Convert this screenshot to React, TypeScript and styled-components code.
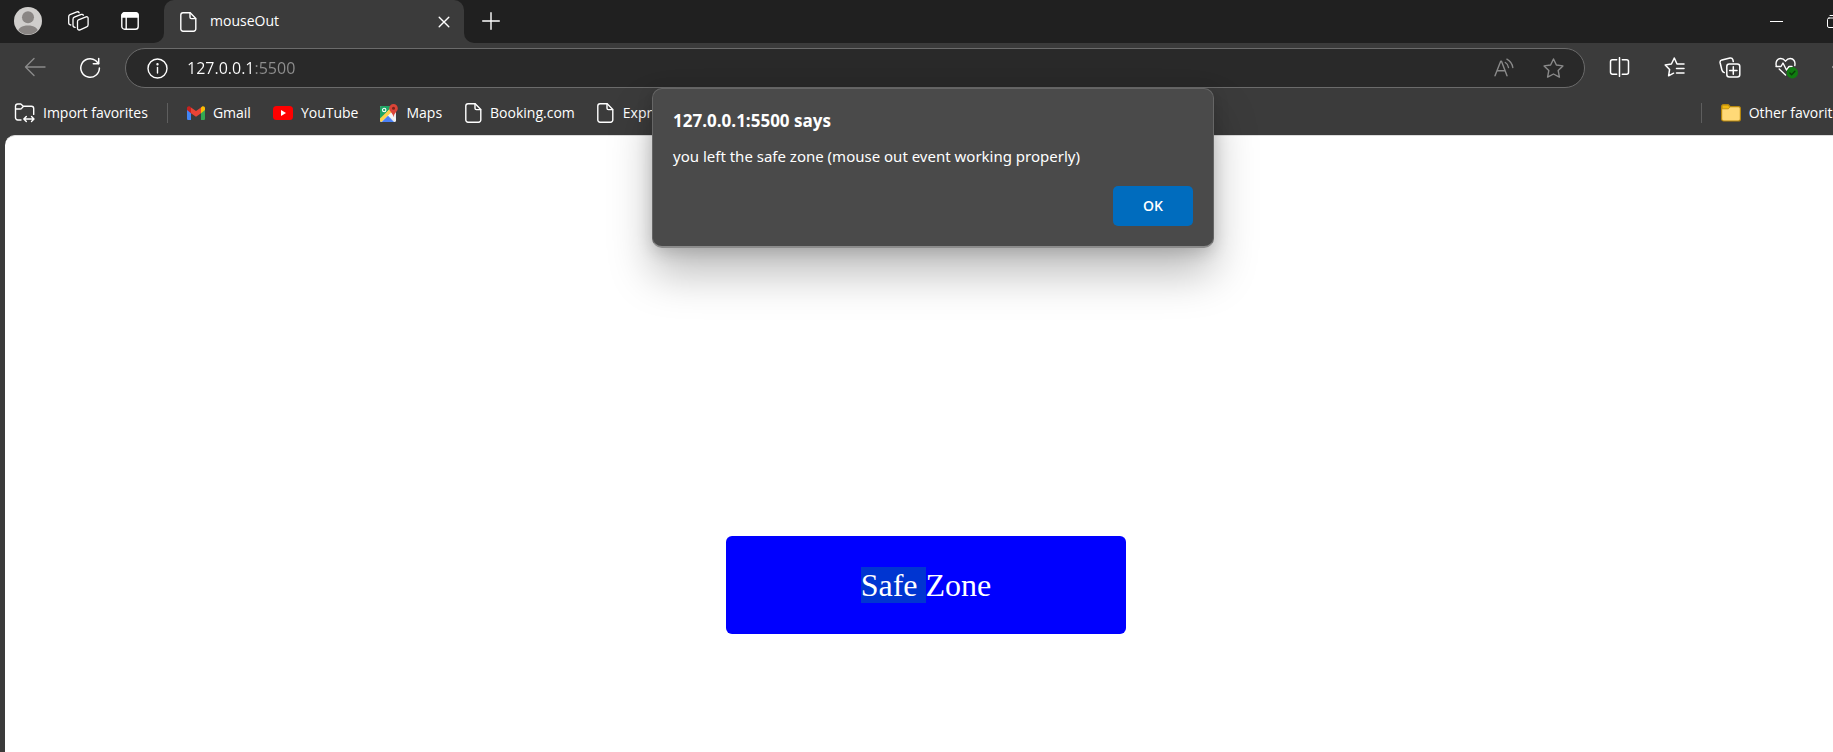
import React from "react";
import styled, { createGlobalStyle } from "styled-components";

const ui = '"Open Sans", "Noto Sans", sans-serif';

const GlobalStyle = createGlobalStyle`
  * { box-sizing: border-box; }
  body { margin: 0; background: #3b3b3b; overflow: hidden; }
  button { font: inherit; color: inherit; background: none; border: 0; padding: 0; cursor: pointer; }
  svg { display: block; flex: none; }
`;

const Viewport = styled.div`
  overflow: hidden;
`;

/* The browser window runs past the right edge of the screen. */
const Browser = styled.div`
  position: relative;
  display: flex;
  flex-direction: column;
  width: calc(100% + 33px);
  min-height: 100vh;
  background: #3b3b3b;
  color: #fff;
  font-family: ${ui};
  font-size: 14px;
`;

const TabStrip = styled.header`
  display: flex;
  height: 43px;
  background: #3b3b3b;
`;

const StripStart = styled.div`
  display: flex;
  align-items: center;
  gap: 23px;
  width: 164px;
  padding: 0 0 1px 14px;
  background: #202020;
  border-bottom-right-radius: 10px;
`;

const TabSlot = styled.div`
  width: 300px;
  background: #202020;
`;

const Tab = styled.div`
  display: flex;
  align-items: center;
  height: 100%;
  padding: 0 14px 0 16px;
  background: #3b3b3b;
  border-radius: 10px 10px 0 0;
`;

const TabTitle = styled.span`
  flex: 1;
  margin-left: 13px;
  padding-bottom: 2px;
  line-height: 20px;
`;

const StripEnd = styled.div`
  display: flex;
  flex: 1;
  align-items: center;
  justify-content: space-between;
  padding: 0 26px 1px 18px;
  background: #202020;
  border-bottom-left-radius: 10px;
`;

const WindowControls = styled.div`
  display: flex;
  align-items: center;
  gap: 44px;
`;

const IconButton = styled.button<{ $dim?: boolean; $wide?: boolean }>`
  display: flex;
  justify-content: center;
  min-width: ${(p) => (p.$wide ? "28px" : "0")};
  color: ${(p) => (p.$dim ? "#8a8a8a" : "#fff")};
`;

const Toolbar = styled.div`
  display: flex;
  align-items: center;
  height: 45px;
  padding: 5px 14px 0 24px;
`;

const NavButtons = styled.div`
  display: flex;
  gap: 33px;
  width: 101px;
`;

const AddressBar = styled.form`
  display: flex;
  flex: 1;
  align-items: center;
  height: 40px;
  padding: 0 20px 0 21px;
  background: #292929;
  border: 1px solid #6b6b6b;
  border-radius: 20px;
`;

const AddressInput = styled.input`
  flex: 1;
  min-width: 0;
  margin-left: 19px;
  padding: 0;
  border: 0;
  outline: 0;
  font: 16px/24px ${ui};
  color: #fff;
  background: linear-gradient(90deg, #fff 67px, #8f8f8f 67px);
  background-clip: text;
  -webkit-text-fill-color: transparent;
`;

const AddressActions = styled.div`
  display: flex;
  gap: 29px;
`;

const ToolbarActions = styled.div`
  display: flex;
  gap: 34px;
  margin-left: 24px;
`;

const FavoritesBar = styled.nav`
  display: flex;
  align-items: center;
  height: 47px;
  padding: 3px 19px 0 14px;
`;

const Favorite = styled.a`
  display: flex;
  align-items: center;
  gap: 8px;
  margin-right: 22px;
  color: #fff;
  line-height: 20px;
  text-decoration: none;
  white-space: nowrap;
`;

const FavoriteIcon = styled.span`
  display: flex;
  justify-content: center;
  min-width: 18px;
`;

const FavoriteButton = styled.button`
  display: flex;
  align-items: center;
  gap: 8px;
  line-height: 20px;
  white-space: nowrap;
`;

const Divider = styled.span`
  width: 1px;
  height: 20px;
  margin: 0 19px;
  background: #5e5e5e;
`;

const Spacer = styled.span`
  flex: 1;
`;

const Page = styled.main`
  flex: 1;
  margin: 0 19px 0 5px;
  padding-top: 400px;
  background: #fff;
  border-top: 1px solid #dcdcdc;
  border-top-left-radius: 10px;
`;

const SafeZone = styled.div`
  width: 400px;
  margin: 0 auto;
  padding: 31px 0;
  background: #00f;
  border-radius: 6px;
  color: #fff;
  font: 32px/36px "Liberation Serif", serif;
  text-align: center;
`;

const Selection = styled.mark`
  display: inline-block;
  color: inherit;
  background: #0035d1;
  white-space: pre;
`;

const Dialog = styled.section`
  position: absolute;
  top: 88px;
  left: 50%;
  display: flex;
  flex-direction: column;
  width: 562px;
  margin-left: -281px;
  padding: 20px 20px 20px 20px;
  background: #4a4a4a;
  border: 1px solid #666;
  border-bottom: 2px solid #8c8c8c;
  border-radius: 10px;
  box-shadow: 0 26px 44px rgba(0, 0, 0, 0.26), 0 4px 16px rgba(0, 0, 0, 0.16);
`;

const DialogTitle = styled.h1`
  margin: 0;
  font-size: 17px;
  font-weight: 700;
  line-height: 24px;
`;

const DialogText = styled.p`
  margin: 11px 0 18px;
  font-family: "Noto Sans", "Open Sans", sans-serif;
  font-size: 15px;
  line-height: 24px;
`;

const OkButton = styled.button`
  align-self: flex-end;
  width: 80px;
  height: 40px;
  padding-bottom: 2px;
  background: #006cbe;
  border-radius: 5px;
  font-size: 14px;
  font-weight: 600;
`;

const stroke = { fill: "none", stroke: "currentColor", strokeWidth: 1.4, strokeLinecap: "round", strokeLinejoin: "round" } as const;

const FileIcon = () => (
  <svg width="17" height="20" viewBox="0 0 17 20" {...stroke}>
    <path d="M3 .8h7.2L15.8 6.4V17a2.2 2.2 0 0 1-2.2 2.2H3A2.2 2.2 0 0 1 .8 17V3A2.2 2.2 0 0 1 3 .8Z" />
    <path d="M10 1v4.2A1.4 1.4 0 0 0 11.400 6.600h4.200" />
  </svg>
);

const AvatarIcon = () => (
  <svg width="28" height="28" viewBox="0 0 28 28">
    <clipPath id="avatar"><circle cx="14" cy="14" r="13.400" /></clipPath>
    <circle cx="14" cy="14" r="14" fill="#d0cecc" />
    <g clipPath="url(#avatar)" fill="#8a8684">
      <circle cx="14" cy="10.300" r="6" />
      <path d="M4 28v-3c0-4 4-6.500 10-6.500S24 21 24 25v3Z" />
    </g>
  </svg>
);

const WorkspacesIcon = () => (
  <svg width="22" height="22" viewBox="0.7 0 22 22" {...stroke} strokeWidth="1.3">
    <path d="M11.200 9.800 18.700 6.900Q20.800 6.300 20.800 8.300V14.800Q20.800 16.300 19.400 16.900L12.800 19.800Q10.300 20.600 10.200 18.200V11.400Q10.200 10.200 11.200 9.800Z" />
    <path d="M7.800 17.400Q5.700 17.300 5.700 15.300V9.200Q5.700 7.800 7 7.200L14 4.400Q15.600 4 16.100 5.200" />
    <path d="M3.500 15Q1.400 14.700 1.400 12.700V6.800Q1.400 5.300 2.700 4.700L9.600 1.900Q11.300 1.400 11.800 2.800" />
  </svg>
);

const TabActionsIcon = () => (
  <svg width="18" height="18" viewBox="0 0 18 18" {...stroke}>
    <rect x=".8" y=".8" width="16.400" height="16.400" rx="2.800" />
    <path d="M1 5V3.200A2.200 2.200 0 0 1 3.200 1h11.600A2.200 2.200 0 0 1 17 3.200V5Z" fill="currentColor" />
    <path d="M5.200 5v12" />
  </svg>
);

const CloseIcon = () => (
  <svg width="12" height="12" viewBox="0 0 12 12" {...stroke}><path d="m1.200 1.200 9.600 9.600M10.800 1.200l-9.600 9.600" /></svg>
);

const PlusIcon = () => (
  <svg width="18" height="18" viewBox="0 0 18 18" {...stroke}><path d="M9 .7v16.600M.7 9h16.600" /></svg>
);

const MinimizeIcon = () => (
  <svg width="13" height="12" viewBox="0 0 13 12"><path d="M0 6.500h13" stroke="#fff" /></svg>
);

const RestoreIcon = () => (
  <svg width="13" height="13" viewBox="0 0 13 13" {...stroke} strokeWidth="1">
    <rect x=".5" y="3" width="9.500" height="9.500" rx="1.500" />
    <path d="M3 .5h6.500a3 3 0 0 1 3 3V10" />
  </svg>
);

const BackIcon = () => (
  <svg width="22" height="20" viewBox="0 0 22 20" {...stroke}><path d="M21 10H1.500M10 1.500 1.500 10l8.500 8.500" /></svg>
);

const RefreshIcon = () => (
  <svg width="22" height="22" viewBox="0 0 22 22" {...stroke} strokeWidth="1.500">
    <path d="M20.400 11a9.300 9.300 0 1 1-3.800-7.500L19.500 6.500" />
    <path d="M19.700 1.500v5.200h-5.400" />
  </svg>
);

const InfoIcon = () => (
  <svg width="21" height="21" viewBox="0 0 21 21" {...stroke}>
    <circle cx="10.500" cy="10.500" r="9.500" />
    <path d="M10.500 9.500v5.500" />
    <circle cx="10.500" cy="6.300" r=".5" fill="currentColor" />
  </svg>
);

const ReadAloudIcon = () => (
  <svg width="20" height="20" viewBox="0 0 20 20" {...stroke}>
    <path d="M1 17.800 6.700 3.300h.8L13 17.800M3 12.800h8.200" />
    <path d="M11.300 4.500Q14 6 14.500 9.500M12.900 1.200Q17.900 4 18.800 9.500" />
  </svg>
);

const star = "m10.500 1 2.900 6 6.500.9-4.700 4.600 1.200 6.600-5.900-3.100-5.900 3.100 1.200-6.600L1.100 7.900 7.600 7Z";

const StarIcon = () => (
  <svg width="21" height="20" viewBox="0 0 21 20" {...stroke}><path d={star} /></svg>
);

const SplitIcon = () => (
  <svg width="21" height="20" viewBox="0 0 21 20" {...stroke} strokeWidth="1.500">
    <path d="M7.700 2.800H3.500A2 2 0 0 0 1.500 4.800v10.400a2 2 0 0 0 2 2h4.200M13.300 2.800h4.200a2 2 0 0 1 2 2v10.400a2 2 0 0 1-2 2h-4.200M10.500.700v18.600" />
  </svg>
);

const FavoritesIcon = () => (
  <svg width="21" height="20" viewBox="0 0 21 20" {...stroke} strokeWidth="1.500">
    <path d="M13 7 10.300 1 7.400 7l-6.200.9 4.400 4.500-1 6.400 5-2.600M13 7h7M12.500 11.500H20M12.500 16H20" />
  </svg>
);

const CollectionsIcon = () => (
  <svg width="22" height="21" viewBox="0 0 22 21" {...stroke} strokeWidth="1.500">
    <rect x="7.800" y="7" width="13" height="13" rx="2.500" />
    <path d="M14.300 9.800v7.400M10.600 13.500H18M5.300 15.600Q3.400 15 2.900 13L1.100 5.700Q.7 3.500 2.900 2.900L11 1Q13.200.7 13.900 2.800L14.300 4.500" />
  </svg>
);

const HealthIcon = () => (
  <svg width="23" height="22" viewBox="0 0 23 22" {...stroke}>
    <path d="M1.200 8.500C.4 4.500 2.500 1.500 5.700 1.500c2 0 3.600 1.100 4.800 2.700 1.200-1.600 2.800-2.700 4.800-2.700 3.200 0 5.300 3 4.500 7M1 9.500h5L8 6l3.500 7L14 9.500h3M4.200 12l6.300 6" />
    <circle cx="17.300" cy="15.800" r="5.700" fill="#107c10" stroke="none" />
    <path d="m14.900 16 1.700 1.700 3.300-3.500" stroke="#0b3d0b" />
  </svg>
);

const MoreIcon = () => (
  <svg width="20" height="20" viewBox="0 0 20 20" fill="currentColor">
    <circle cx="2" cy="10" r="1.500" /><circle cx="9" cy="10" r="1.500" /><circle cx="16" cy="10" r="1.500" />
  </svg>
);

const ImportIcon = () => (
  <svg width="21" height="20" viewBox="0 0 21 20" {...stroke}>
    <path d="M7 17H3.700A2.200 2.200 0 0 1 1.500 14.800V3.200A2.200 2.200 0 0 1 3.700 1h3.100L9.300 3.200h8.200a2.200 2.200 0 0 1 2.200 2.200v6M1.500 6h4.600Q7 6 7.600 5.400L9.300 3.500M10 16h9.800M12.300 13.500 9.800 16l2.500 2.500M17.500 13.500 20 16l-2.500 2.500" />
  </svg>
);

const GmailIcon = () => (
  <svg width="18" height="14" viewBox="0 0 18 14">
    <path d="M0 3v9.700C0 13.400.6 14 1.300 14H4V6Z" fill="#4285f4" />
    <path d="M14 6v8h2.700c.7 0 1.300-.6 1.300-1.300V3Z" fill="#34a853" />
    <path d="M4 1.400v5.800l5 3.600 5-3.600V1.400L9 5Z" fill="#ea4335" />
    <path d="M0 2v2l4 3.200V1.400L2.900.5C1.700-.4 0 .5 0 2Z" fill="#c5221f" />
    <path d="M18 2v2l-4 3.200V1.400l1.100-.9C16.300-.4 18 .5 18 2Z" fill="#fbbc04" />
  </svg>
);

const YouTubeIcon = () => (
  <svg width="20" height="14" viewBox="0 0 20 14">
    <rect width="20" height="14" rx="3.500" fill="#f00" />
    <path d="M8 4v6l5-3Z" fill="#fff" />
  </svg>
);

const MapsIcon = () => (
  <svg width="18" height="19" viewBox="0 0 18 19">
    <rect y="2" width="16" height="16" rx="1.500" fill="#e8eaed" />
    <path d="M0 16V3.500A1.500 1.500 0 0 1 1.500 2H12L1 15.500Z" fill="#1fa463" />
    <path d="M0 14.500 10.300 4.500l2 3L1.400 18 0 17Z" fill="#ffd04b" />
    <path d="m8 11.500 4-3 4 6.500v2Z" fill="#f5f5f5" />
    <path d="M1.700 18 8 11.800l6 6.200Z" fill="#4a80f5" />
    <circle cx="4.200" cy="6" r="1.700" fill="none" stroke="#fff" strokeWidth="1.100" />
    <path d="M13.500 0a4.300 4.300 0 0 0-4.300 4.300c0 3.400 3.600 4.200 4.300 8.900.7-4.700 4.300-5.500 4.300-8.900A4.300 4.300 0 0 0 13.500 0Z" fill="#db4437" />
    <circle cx="13.500" cy="4.300" r="1.500" fill="#7b231c" />
  </svg>
);

const FolderIcon = () => (
  <svg width="20" height="18" viewBox="0 0 20 18">
    <path d="M.6 15V2.600a2 2 0 0 1 2-2h4.500l2.200 2h8.100a2 2 0 0 1 2 2V15a2 2 0 0 1-2 2H2.600a2 2 0 0 1-2-2Z" fill="#ffd977" stroke="#b5860c" strokeWidth="1.200" />
    <path d="M1.200 4.800V2.600a1.400 1.400 0 0 1 1.400-1.400h4.300l2 1.900-1.500 1.700Z" fill="#f2b90f" stroke="#b5860c" strokeWidth=".8" />
  </svg>
);

const favorites = [
  { label: "Gmail", Icon: GmailIcon },
  { label: "YouTube", Icon: YouTubeIcon },
  { label: "Maps", Icon: MapsIcon },
  { label: "Booking.com", Icon: FileIcon },
  { label: "Express", Icon: FileIcon },
];

const actions = [
  { label: "Split screen", Icon: SplitIcon },
  { label: "Favorites", Icon: FavoritesIcon },
  { label: "Collections", Icon: CollectionsIcon },
  { label: "Browser essentials", Icon: HealthIcon },
  { label: "Settings and more", Icon: MoreIcon },
];

export default function App() {
  return (
    <Viewport>
      <GlobalStyle />
      <Browser>
        <TabStrip>
          <StripStart>
            <IconButton $wide aria-label="Profile"><AvatarIcon /></IconButton>
            <IconButton $wide aria-label="Workspaces"><WorkspacesIcon /></IconButton>
            <IconButton $wide aria-label="Tab actions"><TabActionsIcon /></IconButton>
          </StripStart>
          <TabSlot>
            <Tab>
              <FileIcon />
              <TabTitle>mouseOut</TabTitle>
              <IconButton aria-label="Close tab"><CloseIcon /></IconButton>
            </Tab>
          </TabSlot>
          <StripEnd>
            <IconButton aria-label="New tab"><PlusIcon /></IconButton>
            <WindowControls>
              <IconButton aria-label="Minimize"><MinimizeIcon /></IconButton>
              <IconButton aria-label="Restore"><RestoreIcon /></IconButton>
            </WindowControls>
          </StripEnd>
        </TabStrip>

        <Toolbar>
          <NavButtons>
            <IconButton $dim aria-label="Back"><BackIcon /></IconButton>
            <IconButton aria-label="Refresh"><RefreshIcon /></IconButton>
          </NavButtons>
          <AddressBar onSubmit={(e) => e.preventDefault()}>
            <IconButton type="button" aria-label="Site information"><InfoIcon /></IconButton>
            <AddressInput aria-label="Address" defaultValue="127.0.0.1:5500" spellCheck={false} />
            <AddressActions>
              <IconButton $dim type="button" aria-label="Read aloud"><ReadAloudIcon /></IconButton>
              <IconButton $dim type="button" aria-label="Add to favorites"><StarIcon /></IconButton>
            </AddressActions>
          </AddressBar>
          <ToolbarActions>
            {actions.map(({ label, Icon }) => (
              <IconButton key={label} aria-label={label}><Icon /></IconButton>
            ))}
          </ToolbarActions>
        </Toolbar>

        <FavoritesBar>
          <FavoriteButton><ImportIcon />Import favorites</FavoriteButton>
          <Divider />
          {favorites.map(({ label, Icon }) => (
            <Favorite key={label} href="#"><FavoriteIcon><Icon /></FavoriteIcon>{label}</Favorite>
          ))}
          <Spacer />
          <Divider />
          <FavoriteButton><FolderIcon />Other favorites</FavoriteButton>
        </FavoritesBar>

        <Page>
          <SafeZone><Selection>Safe </Selection>Zone</SafeZone>
        </Page>

        <Dialog role="alertdialog" aria-labelledby="dialog-title" aria-describedby="dialog-text">
          <DialogTitle id="dialog-title">127.0.0.1:5500 says</DialogTitle>
          <DialogText id="dialog-text">you left the safe zone (mouse out event working properly)</DialogText>
          <OkButton>OK</OkButton>
        </Dialog>
      </Browser>
    </Viewport>
  );
}
